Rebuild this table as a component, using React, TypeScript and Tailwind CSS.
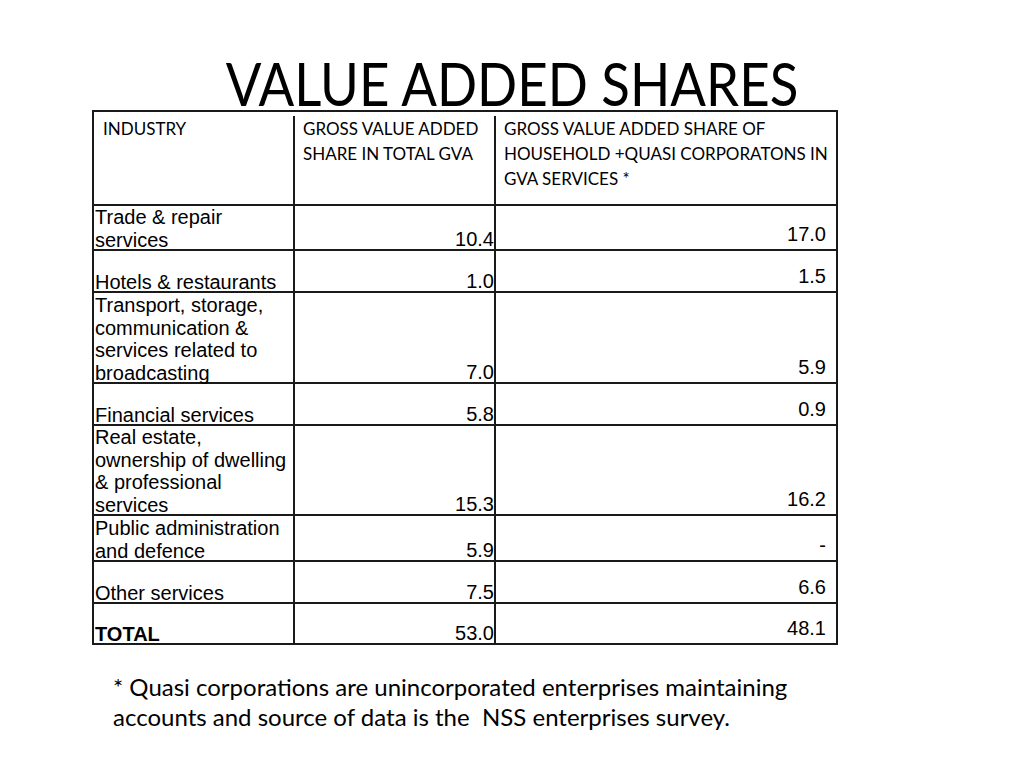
const rows = [
  { name: ["Trade & repair", "services"], gva: "10.4", hh: "17.0", h: "h-[45px]" },
  { name: ["Hotels & restaurants"], gva: "1.0", hh: "1.5", h: "h-[42px]" },
  {
    name: ["Transport, storage,", "communication &", "services related to", "broadcasting"],
    gva: "7.0",
    hh: "5.9",
    h: "h-[91px]",
  },
  { name: ["Financial services"], gva: "5.8", hh: "0.9", h: "h-[42px]" },
  {
    name: ["Real estate,", "ownership of dwelling", "& professional", "services"],
    gva: "15.3",
    hh: "16.2",
    h: "h-[90px]",
  },
  { name: ["Public administration", "and defence"], gva: "5.9", hh: "-", h: "h-[46px]" },
  { name: ["Other services"], gva: "7.5", hh: "6.6", h: "h-[42px]" },
  { name: ["TOTAL"], gva: "53.0", hh: "48.1", h: "h-[39px]", bold: true },
];

const App = () => {
  return (
    <div className="w-[1024px] h-[768px] bg-white text-black overflow-hidden">
      <h1 className="pt-[53px] text-center text-[60px] leading-[60px] font-['Lato',sans-serif] scale-x-88">
        VALUE ADDED SHARES
      </h1>

      <div className="ml-[92px] mt-[-3px] w-[746px] border-2 border-[#1a1a1a]">
        <div className="flex h-[94px] border-b-2 border-[#1a1a1a] font-['Lato',sans-serif] text-[17px] leading-[25px] pt-[4px]">
          <div className="w-[201px] shrink-0 border-r-2 border-[#1a1a1a] pl-[9px]">INDUSTRY</div>
          <div className="w-[201px] shrink-0 border-r-2 border-[#1a1a1a] pl-[8px]">
            GROSS VALUE ADDED
            <br />
            SHARE IN TOTAL GVA
          </div>
          <div className="flex-1 pl-[8px]">
            GROSS VALUE ADDED SHARE OF
            <br />
            HOUSEHOLD +QUASI CORPORATONS IN
            <br />
            GVA SERVICES *
          </div>
        </div>

        {rows.map((r, i) => (
          <div
            key={r.gva + r.hh}
            className={`flex ${r.h} font-['Liberation_Sans',Arial,sans-serif] ${
              i < rows.length - 1 ? "border-b-2 border-[#1a1a1a]" : ""
            }`}
          >
            <div
              className={`w-[201px] shrink-0 border-r-2 border-[#1a1a1a] flex flex-col justify-end pl-[1px] text-[20px] leading-[22.5px] whitespace-nowrap ${
                r.bold ? "font-bold" : ""
              }`}
            >
              <div className="-mb-[2px]">
                {r.name.map((l, j) => (
                  <div key={j}>{l}</div>
                ))}
              </div>
            </div>
            <div className="w-[201px] shrink-0 border-r-2 border-[#1a1a1a] flex items-end justify-end text-[20px] leading-[22.5px]">
              <span className="-mb-[1px]">{r.gva}</span>
            </div>
            <div className="flex-1 flex items-end justify-end pr-[10px] pb-[4px] text-[20px] leading-[22.5px]">
              {r.hh}
            </div>
          </div>
        ))}
      </div>

      <p className="ml-[113px] mt-[27px] text-[24px] leading-[30px] font-['Lato',sans-serif]">
        * Quasi corporations are unincorporated enterprises maintaining
        <br />
        accounts and source of data is the&nbsp; NSS enterprises survey.
      </p>
    </div>
  );
};

export default App;
